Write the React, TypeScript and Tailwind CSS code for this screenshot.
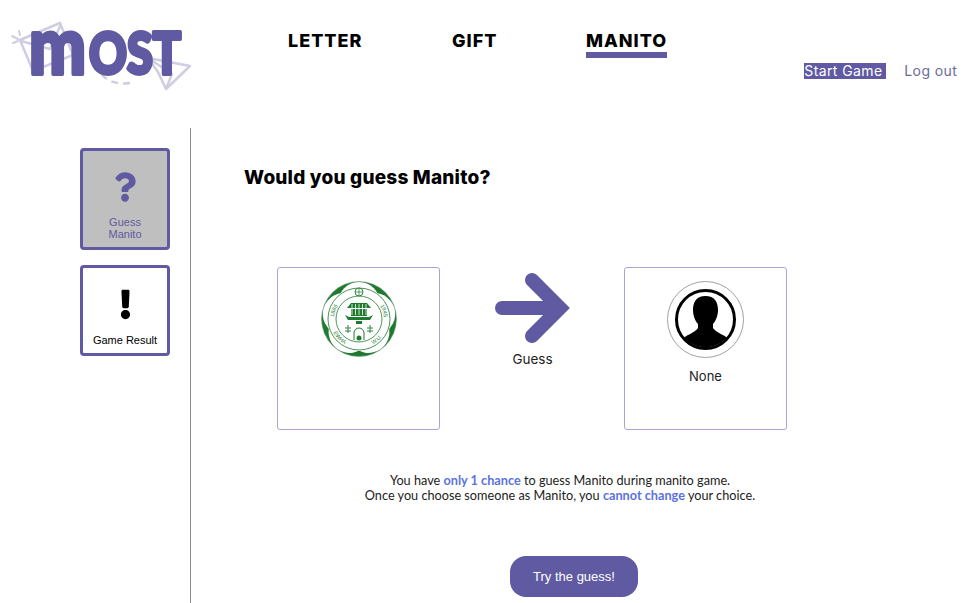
import { FaExclamation, FaQuestion } from "react-icons/fa";

const purple = "#5f5aa2";
const green = "#1e7a2e";

function Logo() {
  const letters = "font-['Lato',sans-serif] font-black";
  return (
    <svg width="190" height="96" viewBox="0 0 190 96" className="shrink-0 overflow-visible">
      <g fill="none" stroke="#cfcde2" strokeWidth="2.5" strokeLinejoin="round">
        <path d="M20 36 L60 19 L73 51 L33 67 Z" />
        <path d="M21 37 L50 45 L61 20" />
        <path d="M148 54 L190 62 L166 85 L158 68 Z" />
        <path d="M148 54 L172 70 L166 85" />
        <path d="M96 60 C100 75 115 83 135 78" strokeDasharray="7 5" />
      </g>
      <g stroke="#cfcde2" strokeWidth="2" strokeLinecap="round">
        <path d="M12 32 L18 35" />
        <path d="M13 39 L18 37" />
        <path d="M19 27 L20 31" />
      </g>
      <g fill={purple} stroke={purple} strokeWidth="4" strokeLinejoin="round" paintOrder="stroke">
        <text x="29" y="70" textLength="57" lengthAdjust="spacingAndGlyphs" className={`${letters} text-[80px]`}>
          m
        </text>
        <text x="89" y="70" textLength="92" lengthAdjust="spacingAndGlyphs" className={`${letters} text-[58px]`}>
          OST
        </text>
      </g>
    </svg>
  );
}

function Seal() {
  const petals = [0, 72, 144, 216, 288];
  const small = "font-['Liberation_Sans',sans-serif] text-[5.500px]";
  return (
    <svg width="78" height="78" viewBox="0 0 78 78">
      <circle cx="39" cy="39" r="37.500" fill={green} stroke="#7f9f85" strokeWidth="0.6" />
      {petals.map((a) => (
        <circle key={a} cx="39" cy="23" r="21" fill="#fff" transform={`rotate(${a} 39 39)`} />
      ))}
      <circle cx="39" cy="39" r="32" fill="#fff" />
      <circle cx="39" cy="39" r="31" fill="none" stroke={green} strokeWidth="0.8" />
      <circle cx="39" cy="39" r="23" fill="#fff" stroke={green} strokeWidth="0.8" />
      <circle cx="39" cy="12" r="4" fill="#fff" stroke={green} strokeWidth="0.9" />
      <path d="M35 12 H43 M39 8 V16" stroke={green} strokeWidth="0.7" />
      <defs>
        <path id="sealTop" d="M14 39 A25 25 0 0 1 64 39" />
        <path id="sealBottom" d="M10 39 A29 29 0 0 0 68 39" />
      </defs>
      <text fill={green} className={small}>
        <textPath href="#sealTop" startOffset="2">1886</textPath>
      </text>
      <text fill={green} className={small}>
        <textPath href="#sealTop" startOffset="64">1945</textPath>
      </text>
      <text fill={green} className={small}>
        <textPath href="#sealBottom" startOffset="14">EWHA</textPath>
      </text>
      <text fill={green} className={small}>
        <textPath href="#sealBottom" startOffset="60">W.U.</textPath>
      </text>
      <g fill={green}>
        <path d="M31 23 H47 L51 28 H27 Z" />
        <rect x="31" y="29" width="16" height="7" />
        <path d="M25 35 L29 37 H49 L53 35 L50 40 H28 Z" />
        <rect x="36" y="41" width="6" height="3" />
      </g>
      <path d="M32 24 V35 M35.500 24 V35 M39 24 V35 M42.500 24 V35 M46 24 V35" stroke="#fff" strokeWidth="0.8" />
      <path d="M34 60 V53 A5 5 0 0 1 44 53 V60" fill="none" stroke={green} strokeWidth="1" />
      <circle cx="39" cy="58" r="2.500" fill={green} />
      <path d="M25 48 H31 M28 45 V53 M47 48 H53 M50 45 V53 M25 51 H31 M47 51 H53" stroke={green} strokeWidth="0.9" />
    </svg>
  );
}

function Avatar() {
  return (
    <svg width="77" height="77" viewBox="0 0 77 77" className="shrink-0">
      <circle cx="38.500" cy="38.500" r="38" fill="#fff" stroke="#8a8a8a" strokeWidth="0.8" />
      <clipPath id="avatarClip">
        <circle cx="38.500" cy="38.500" r="28" />
      </clipPath>
      <circle cx="38.500" cy="38.500" r="29" fill="#fff" stroke="#000" strokeWidth="3" />
      <g clipPath="url(#avatarClip)">
        <path d="M38.500 15 C29.500 15 26 21 26 29 C26 34 28 40 31 43 L31 47 C28 52 18 54 13 60 L13 70 H64 V60 C59 54 49 52 46 47 L46 43 C49 40 51 34 51 29 C51 21 47.500 15 38.500 15 Z" fill="#000" />
      </g>
    </svg>
  );
}

export default function App() {
  return (
    <div className="h-[603px] w-[977px] overflow-hidden bg-white font-['Noto_Sans',sans-serif] text-black">
      <header className="flex h-[128px] items-start">
        <div className="mt-1 w-[268px]">
          <Logo />
        </div>
        <nav className="mt-[30px] flex items-start font-['Inter',sans-serif] text-[18px] font-extrabold leading-[22px] tracking-[1px]">
          <a className="ml-5 w-[164px]">LETTER</a>
          <a className="w-[134px]">GIFT</a>
          <a className="border-b-[6px] border-[#5f5aa2]">MANITO</a>
        </nav>
        <div className="ml-[137px] mt-[63px] flex items-center font-['Inter',sans-serif] text-[14px] leading-4 tracking-[0.4px]">
          <a className="w-[82px] bg-[#5f5aa2] text-white">Start Game</a>
          <a className="ml-[18px] text-[#6b6a9e]">Log out</a>
        </div>
      </header>

      <div className="flex h-[475px]">
        <aside className="flex w-[191px] shrink-0 flex-col items-start gap-[15px] border-r border-[#8c8c8c] pl-[80px] pt-5 font-['Liberation_Sans',sans-serif] text-[11px] leading-3">
          <button className="flex h-[102px] w-[90px] flex-col items-center rounded border-[3px] border-[#5f5aa2] bg-[#bfbfbf] pt-[21px] text-[#5f5aa2]">
            <FaQuestion className="h-[30px] w-[22px]" />
            <span className="mt-[14px] text-center">
              Guess
              <br />
              Manito
            </span>
          </button>
          <button className="flex h-[91px] w-[90px] flex-col items-center rounded border-[3px] border-[#5f5aa2] bg-white pt-[21px] text-black">
            <FaExclamation className="h-[31px] w-[11px]" />
            <span className="mt-[14px] whitespace-nowrap">Game Result</span>
          </button>
        </aside>

        <main className="min-w-0 flex-1 pl-[53px]">
          <h1 className="mt-[38px] font-['Inter',sans-serif] text-[19px] font-extrabold leading-6 tracking-[0.2px]">
            Would you guess Manito?
          </h1>
          <div className="ml-[33px] mt-[77px] flex items-start">
            <div className="flex h-[163px] w-[163px] justify-center rounded-[3px] border border-[#aaa6d2] pt-[12px]">
              <Seal />
            </div>
            <div className="ml-[55px] flex w-[75px] flex-col items-center pt-[5px]">
              <svg width="75" height="74" viewBox="0 0 75 74">
                <path
                  d="M7 36 H65 M37 8 L65 36 L37 64"
                  fill="none"
                  stroke={purple}
                  strokeWidth="14"
                  strokeLinecap="round"
                />
              </svg>
              <span className="mt-[3px] font-['Inter',sans-serif] text-[13.500px] leading-5 text-[#222]">Guess</span>
            </div>
            <div className="ml-[54px] flex h-[163px] w-[163px] flex-col items-center rounded-[3px] border border-[#aaa6d2] pt-[13px]">
              <Avatar />
              <span className="mt-[10px] font-['Inter',sans-serif] text-[13px] leading-4 text-[#222]">None</span>
            </div>
          </div>
          <p className="mt-[43px] w-[632px] text-center font-['Lato',sans-serif] text-[12.700px] leading-[15px] text-[#222]">
            You have <b className="font-bold text-[#5b73e0]">only 1 chance</b> to guess Manito during manito game.
            <br />
            Once you choose someone as Manito, you <b className="font-bold text-[#5b73e0]">cannot change</b> your choice.
          </p>
          <button className="ml-[266px] mt-[53px] h-[41px] w-[128px] rounded-2xl bg-[#5f5aa2] font-['Liberation_Sans',sans-serif] text-[13px] text-white">
            Try the guess!
          </button>
        </main>
      </div>
    </div>
  );
}
